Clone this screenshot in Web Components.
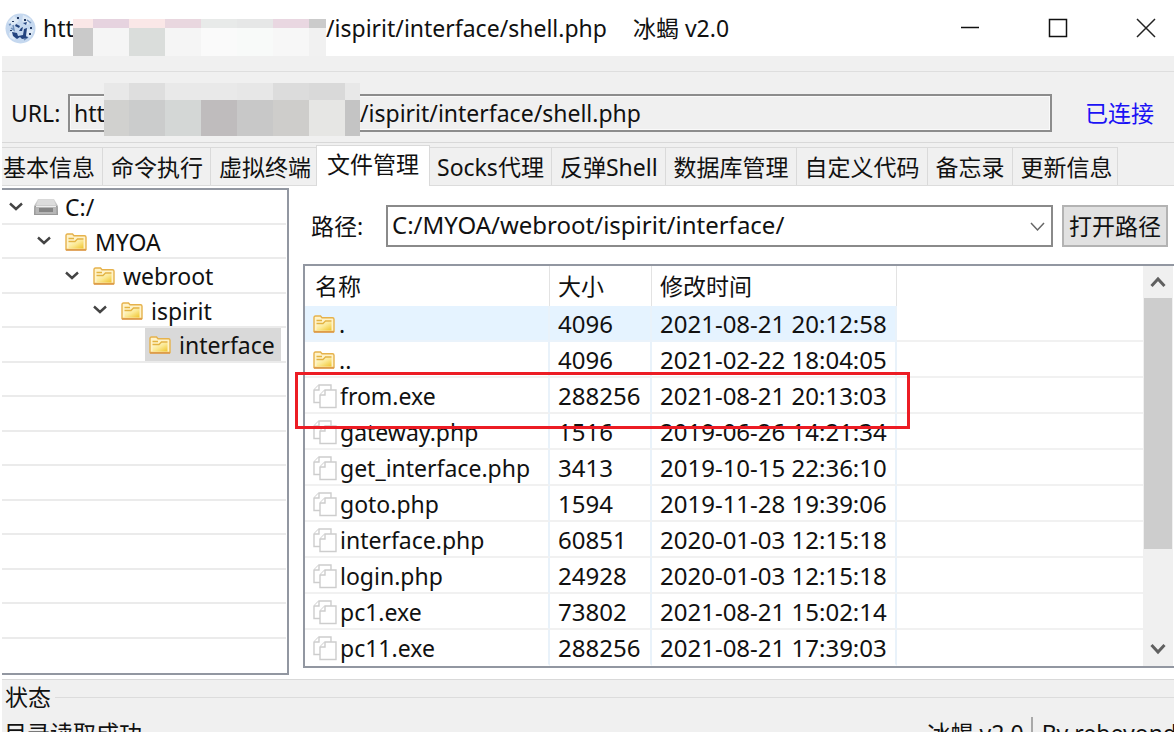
<!DOCTYPE html>
<html lang="zh-CN">
<head>
<meta charset="utf-8">
<title>冰蝎 v2.0</title>
<style>
  html, body { margin: 0; height: 100%; overflow: hidden; }
  body { background: #fff; color: #111; font: 23px/32px "Noto Sans", "Noto Sans CJK SC", sans-serif; }
</style>
</head>
<body>
<app-window></app-window>
<script>
const define = (name, html, setup) => {
  const tpl = document.createElement('template');
  tpl.innerHTML = '<style>*{box-sizing:border-box} button,input,select{font:inherit;color:inherit;margin:0}</style>' + html;
  customElements.define(name, class extends HTMLElement {
    connectedCallback() {
      if (this.shadowRoot) return;
      const root = this.attachShadow({ mode: 'open' });
      root.append(tpl.content.cloneNode(true));
      if (setup) setup(this, root);
    }
  });
};

const ICONS = {
  folder: `<svg width="22" height="18" viewBox="0 0 22 18"><defs><linearGradient id="g" x1="0" y1="0" x2="1" y2="1"><stop offset="0" stop-color="#fffbe0"/><stop offset=".5" stop-color="#fbe892"/><stop offset="1" stop-color="#efc42c"/></linearGradient></defs>
    <path d="M1 16.500V2.500Q1 1 2.500 1H7.500L9 2.800H19.500Q21 2.800 21 4.300V16.500Z" fill="#fff3c9" stroke="#e6b24c" stroke-width="1.400"/>
    <path d="M3.500 15.500V9H10L12 7H18.500V15.500Z" fill="url(#g)"/><path d="M3.500 5.500H9M3.500 8.500H10L12.500 6H18.500" fill="none" stroke="#e3b341" stroke-width="1.300"/><path d="M1 17H21" stroke="#dc9848" stroke-width="1.600"/></svg>`,
  drive: `<svg width="24" height="18" viewBox="0 0 24 18"><defs><linearGradient id="d" x1="0" y1="0" x2="0" y2="1"><stop offset="0" stop-color="#d9d9d9"/><stop offset="1" stop-color="#989898"/></linearGradient></defs>
    <path d="M4 1H20L24 8V17H0V8Z" fill="url(#d)"/><path d="M4.500 1.500H19.500L22 7.500H2Z" fill="#dcdcdc"/><path d="M1 8.500H23V16.500H1Z" fill="#b6b6b6" stroke="#999"/><rect x="5" y="10" width="14" height="4" fill="#858585"/><path d="M2 8.500H22" stroke="#eee"/></svg>`,
  file: `<svg width="24" height="25" viewBox="0 0 24 25" fill="#fff" stroke="#cdcdcd" stroke-width="1.400"><path d="M1 18.500V6L6 1H18V18.500Z"/><path d="M1 6H6V1" /><path d="M7 23.500V11L12 6H23V23.500Z"/><path d="M7 11H12V6"/></svg>`,
  down: `<svg width="14" height="9" viewBox="0 0 14 9"><path d="M1 1.500L7 7L13 1.500" fill="none" stroke="#444" stroke-width="2.400"/></svg>`
};

/* Pixelated strip: rows of "height width:colour width:colour ..." */
define('mosaic-strip', `<style>:host{display:block;flex:none} svg{display:block}</style><svg shape-rendering="crispEdges" aria-hidden="true"></svg>`, (el, root) => {
  let y = 0, w = 0, out = '';
  for (const row of el.getAttribute('rows').split(';')) {
    const [h, ...cells] = row.trim().split(' ');
    let x = 0;
    for (const c of cells) {
      const [cw, col] = c.split(':');
      out += `<rect x="${x}" y="${y}" width="${cw}" height="${h}" fill="#${col}"/>`;
      x += +cw;
    }
    w = Math.max(w, x); y += +h;
  }
  const svg = root.querySelector('svg');
  svg.setAttribute('width', w); svg.setAttribute('height', y);
  svg.innerHTML = out;
});

define('ui-icon', `<style>:host{display:block;flex:none} svg{display:block}</style>`, (el, root) => {
  root.innerHTML += ICONS[el.getAttribute('name')];
});

define('title-bar', `<style>
  :host{display:flex;align-items:center;height:56px;background:#fff}
  .logo{margin-left:3px;margin-right:7px;flex:none}
  h1{font:inherit;margin:0;display:flex;align-items:flex-start;white-space:pre;height:32px}
  .head{width:30px;overflow:hidden}
  mosaic-strip{margin-top:7px}
  .name{margin-left:26px}
  .controls{margin-left:auto;display:flex}
  button{border:0;background:none;padding:0;width:88px;height:56px;display:grid;place-items:center}
  button:last-child{margin-right:-16px}
</style>
<svg class="logo" width="31" height="31" viewBox="0 0 31 31"><circle cx="15.500" cy="15.500" r="15" fill="#c5d8ef"/>
  <path d="M3 9L9 3L14 8L8 13ZM18 2L26 6L23 12L17 8ZM21 16L29 17L25 25L21 22ZM4 20L8 18L10 27L5 25Z" fill="#dfeaf6"/>
  <path d="M6 15L9 17L8 12M22 7L26 10M4 12L6 11M19 27L23 24" stroke="#6f8fba" fill="none" stroke-width="1.500"/>
  <path d="M7 19L12 20L13 23L18 22L19 16L22 15L21 23L23 25L17 26L15 24L12 26L8 23ZM11 11L15 13L14 15L10 13ZM18 10L22 9L21 12ZM16 15L18 14L17 18L14 18Z" fill="#24447f"/>
  <path d="M12 4h2v2h-2zM19 6h2v2h-2zM25 14h2v2h-2zM7 8h2v1h-2zM24 20h2v2h-2zM5 17h2v1h-2z" fill="#223860"/></svg>
<h1><span class="head">htt</span><mosaic-strip rows="9 20:fae7e7 36:e6d3df 36:fae7e7 36:e9d7df 36:e8eae9 36:e6e7e7 36:e9d7e1 17:cbcbcb;30 20:cacaca 36:f5f5f5 36:dadddb 36:f5f5f5 36:fafafa 36:f8faf9 36:f7f7f7 17:f1f1f1"></mosaic-strip><span>/ispirit/interface/shell.php</span><span class="name">冰蝎 v2.0</span></h1>
<div class="controls">
  <button aria-label="最小化"><svg width="20" height="20" viewBox="0 0 20 20"><path d="M1 9.500H19" stroke="#111" stroke-width="1.500"/></svg></button>
  <button aria-label="最大化"><svg width="20" height="20" viewBox="0 0 20 20"><rect x="1.500" y="1.500" width="17" height="17" fill="none" stroke="#111" stroke-width="1.500"/></svg></button>
  <button aria-label="关闭"><svg width="20" height="20" viewBox="0 0 20 20"><path d="M1 1L19 19M19 1L1 19" stroke="#222" stroke-width="1.500"/></svg></button>
</div>`);

define('url-bar', `<style>
  :host{display:flex;align-items:center;box-sizing:border-box;height:71px;margin-top:15px;border-top:1px solid #dedede;padding:12px 0 0 9px;background:#f0f0f0;position:relative;z-index:1}
  label{width:57px;flex:none}
  .field{flex:1;display:flex;align-items:flex-start;height:38px;border:2px solid #8c8c8c;box-shadow:inset 0 0 0 1px #fafafa}
  input{border:0;background:none;padding:0;height:34px;line-height:34px;outline:0}
  .scheme{width:34px;padding-left:4px;flex:none}
  .path{flex:1;min-width:0}
  mosaic-strip{margin:-13px 0}
  output{width:122px;padding-left:33px;color:#1a12f5;flex:none;white-space:nowrap}
</style>
<label for="u">URL:</label>
<div class="field"><input class="scheme" id="u" value="htt" readonly><mosaic-strip rows="17 25:e8e8e8 36:dedede 36:e9e9e9 36:e9e9e9 36:e7e7e7 36:dcdcdc 36:d9d9d9 15:e8e8e8;36 25:d1d1cf 36:cbcccc 36:d4d7d6 36:bfbcbd 36:c8c8c8 36:cecdcb 36:e6e6e4 15:c4c4c4"></mosaic-strip><input class="path" aria-label="URL 路径" value="/ispirit/interface/shell.php" readonly></div>
<output>已连接</output>`);

define('tab-strip', `<style>
  :host{display:flex;align-items:flex-end;box-sizing:border-box;height:44px;border-top:1px solid #d8d8d8;border-bottom:1px solid #dcdcdc;background:#f0f0f0}
  button{height:38px;border:1px solid #dadada;border-width:1px 1px 0 0;background:#f0f0f0;padding:0 7px 0 8px;line-height:36px;white-space:nowrap}
  button:first-of-type{padding-left:1px}
  button:last-of-type{padding-right:4px}
  button[aria-selected=true]{height:41px;padding:0 10px 5px;margin:0 -1px -1px -3px;background:#fff;border-left-width:1px;position:relative}
</style>`, (el, root) => {
  el.setAttribute('role', 'tablist');
  el.getAttribute('tabs').split(',').forEach((t, i) => {
    const b = document.createElement('button');
    b.setAttribute('role', 'tab');
    b.setAttribute('aria-selected', i == el.getAttribute('selected'));
    b.textContent = t;
    root.append(b);
  });
});

define('tree-node', `<style>
  :host{display:flex;align-items:center;border-bottom:2px solid #ebebeb;min-height:0}
  .tw{width:24px;flex:none}
  .item{display:flex;align-items:center;gap:8px;height:100%;line-height:30px;padding:2px 6px 0 4px;white-space:nowrap}
  .item.drive{gap:7px;padding-left:1px}
  :host([selected]) .item{background:#d9d9d9}
</style>`, (el, root) => {
  const label = el.getAttribute('label');
  if (!label) return;
  const icon = el.getAttribute('icon') || 'folder';
  el.setAttribute('role', 'treeitem');
  el.style.paddingLeft = (+el.getAttribute('level') * 28 + 7) + 'px';
  root.innerHTML += `<span class="tw">${el.hasAttribute('open') ? '<ui-icon name="down"></ui-icon>' : ''}</span><span class="item ${icon}"><ui-icon name="${icon}"></ui-icon><span>${label}</span></span>`;
});

define('folder-tree', `<style>
  :host{display:grid;grid-auto-rows:1fr;flex:none;box-sizing:border-box;width:287px;border:2px solid #9297a1;border-left:0;padding-right:1px;background:#fff}
  ::slotted(:last-child){border-bottom-color:transparent}
</style><slot></slot>`);

define('path-bar', `<style>
  :host{display:flex;align-items:center;height:42px;margin:0 6px 0 8px}
  label{width:75px;flex:none;}
  .combo{flex:1;position:relative;display:flex;min-width:0}
  select{appearance:none;width:100%;height:42px;border:2px solid #8a8a8a;border-radius:0;background:#fff;padding:0 40px 3px 4px;font-size:24px}
  .combo svg{position:absolute;right:8px;top:17px;pointer-events:none}
  button{margin-left:9px;width:106px;height:42px;border:2px solid #b3b3b3;background:#e1e1e1;padding:0;white-space:nowrap;flex:none}
</style>
<label for="p">路径:</label>
<span class="combo"><select id="p"><option>C:/MYOA/webroot/ispirit/interface/</option></select><svg width="15" height="10" viewBox="0 0 15 10"><path d="M1 1L7.500 8L14 1" fill="none" stroke="#666" stroke-width="1.500"/></svg></span>
<button>打开路径</button>`);

define('file-list', `<style>
  :host{display:flex;position:relative;border:2px solid #9297a1;border-right:0;background:#fff}
  table{flex:1;border-collapse:separate;border-spacing:0;table-layout:fixed;width:0}
  .n{width:245px}.s{width:102px}.t{width:245px}
  th,td{font-weight:400;text-align:left;padding:0 0 0 8px;white-space:nowrap;overflow:hidden}
  th{height:40px;border-right:1px solid #e3e3e3}
  td{height:36px;border-bottom:2px solid #f1f1f1;border-right:2px solid #e9f2fa;padding-top:2px}
  td:nth-child(2),td:nth-child(3){font-size:24px}
  th:first-child{padding-left:10px}
  th:last-child,td:last-child{border-right:0}
  td span{display:flex;align-items:center;gap:3px}
  .folder{gap:4px}
  tr.hot td:not(:last-child){background:#e5f3ff;border-bottom-color:#eaf3fb}
  tr:last-child td{border-bottom-color:transparent}
  .bar{width:30px;margin-right:1px;background:#f0f0f0;display:flex;flex-direction:column;align-items:center;padding:9px 0 10px}
  .thumb{width:28px;flex:1;background:#cdcdcd;margin:10px 0 94px}
  .mark{position:absolute;left:-10px;top:106px;width:615px;height:57px;border:3px solid #ec1c24;pointer-events:none}
</style>
<table><colgroup><col class="n"><col class="s"><col class="t"><col></colgroup>
<thead><tr><th>名称</th><th>大小</th><th>修改时间</th><th></th></tr></thead><tbody></tbody></table>
<div class="bar"><svg width="16" height="13" viewBox="0 0 16 13"><path d="M1.500 11L8 4L14.500 11" fill="none" stroke="#606060" stroke-width="3"/></svg><div class="thumb"></div><svg width="16" height="13" viewBox="0 0 16 13"><path d="M1.500 2L8 9L14.500 2" fill="none" stroke="#606060" stroke-width="3"/></svg></div>
<div class="mark"></div>`, (el, root) => {
  const rows = [
    ['.', '4096', '2021-08-21 20:12:58'], ['..', '4096', '2021-02-22 18:04:05'],
    ['from.exe', '288256', '2021-08-21 20:13:03'], ['gateway.php', '1516', '2019-06-26 14:21:34'],
    ['get_interface.php', '3413', '2019-10-15 22:36:10'], ['goto.php', '1594', '2019-11-28 19:39:06'],
    ['interface.php', '60851', '2020-01-03 12:15:18'], ['login.php', '24928', '2020-01-03 12:15:18'],
    ['pc1.exe', '73802', '2021-08-21 15:02:14'], ['pc11.exe', '288256', '2021-08-21 17:39:03']];
  root.querySelector('tbody').innerHTML = rows.map(([n, s, t], i) => {
    const icon = i < 2 ? 'folder' : 'file';
    return `<tr${i ? '' : ' class="hot"'}><td><span class="${icon}"><ui-icon name="${icon}"></ui-icon>${n}</span></td><td>${s}</td><td>${t}</td><td></td></tr>`;
  }).join('');
});

define('status-area', `<style>
  :host{display:block;border-top:1px solid #d9d9d9;background:#f0f0f0;padding-left:2px}
  fieldset{margin:0;border:0;padding:0;min-width:0}
  legend{display:flex;width:100%;align-items:center;gap:4px;padding:0 0 0 1px;height:34px}
  legend::after{content:"";flex:1;border-top:1px solid #dcdcdc}
  .line{display:flex;justify-content:space-between;white-space:nowrap;padding-top:3px}
  .about{display:flex}
  .about span+span{border-left:2px solid #a8a8a8;margin-left:7px;padding-left:9px;margin-right:-3px}
</style>
<fieldset><legend>状态</legend><div class="line"><span>目录读取成功</span><div class="about"><span>冰蝎 v2.0</span><span>By rebeyond</span></div></div></fieldset>`);

define('app-window', `<style>
  :host{display:flex;flex-direction:column;padding-left:2px}
  .top{background:#f0f0f0;display:flow-root}
  .work{display:flex;gap:14px;background:#fff;padding:2px 0 4px}
  .right{flex:1;min-width:0;padding:17px 0 7px}
  file-list{margin-top:17px}
</style>
<title-bar></title-bar>
<div class="top"><url-bar></url-bar>
<tab-strip selected="3" tabs="基本信息,命令执行,虚拟终端,文件管理,Socks代理,反弹Shell,数据库管理,自定义代码,备忘录,更新信息"></tab-strip></div>
<div class="work">
  <folder-tree role="tree">
    <tree-node level="0" icon="drive" label="C:/" open></tree-node>
    <tree-node level="1" label="MYOA" open></tree-node>
    <tree-node level="2" label="webroot" open></tree-node>
    <tree-node level="3" label="ispirit" open></tree-node>
    <tree-node level="4" label="interface" selected></tree-node>
    <tree-node></tree-node><tree-node></tree-node><tree-node></tree-node><tree-node></tree-node><tree-node></tree-node><tree-node></tree-node><tree-node></tree-node><tree-node></tree-node><tree-node></tree-node>
  </folder-tree>
  <div class="right"><path-bar></path-bar><file-list></file-list></div>
</div>
<status-area></status-area>`);
</script>
</body>
</html>
